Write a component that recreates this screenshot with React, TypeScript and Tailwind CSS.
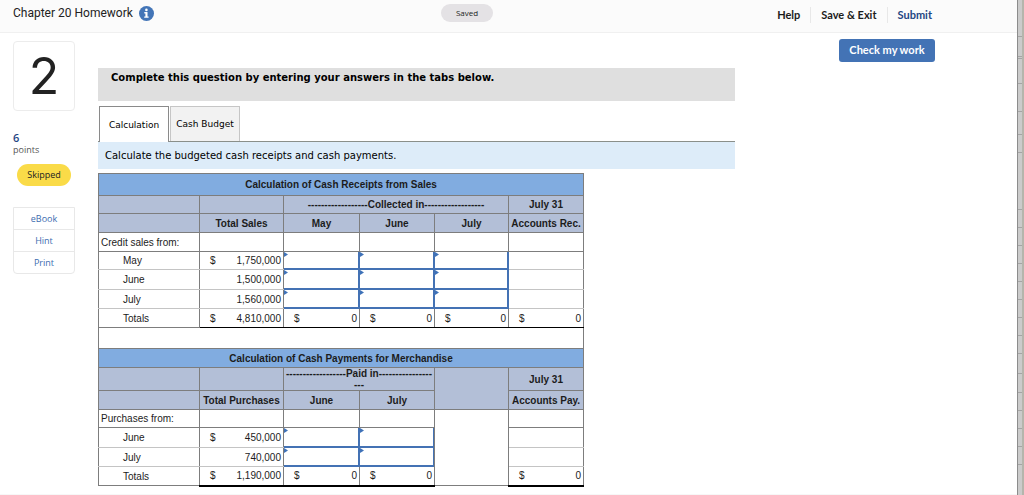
import { useState } from 'react'
import type { ReactNode } from 'react'

const MONTHS = ['May', 'June', 'July']

const SALES = [
  { month: 'May', dollar: true, amount: '1,750,000', height: 'h-[18px]', input: 'h-[17px]', line: 'border-t-[#c4c4c4]' },
  { month: 'June', dollar: false, amount: '1,500,000', height: 'h-[20px]', input: 'h-[19px]', line: 'border-t-[#c4c4c4]' },
  { month: 'July', dollar: false, amount: '1,560,000', height: 'h-[19px]', input: 'h-[18px]', line: 'border-t-[#7d7d7d]' },
]

const PURCHASES = [
  { month: 'June', dollar: true, amount: '450,000', height: 'h-[20px]', input: 'h-[19px]', line: 'border-t-[#c4c4c4]' },
  { month: 'July', dollar: false, amount: '740,000', height: 'h-[19px]', input: 'h-[18px]', line: 'border-t-[#7d7d7d]' },
]

// row heights of the sheet that shows behind the page at the right edge
const SHEET_ROWS = [37, 20, 2, 25, 28, 23, 18, 57, 18, 18, 18, 18, 18, 18, 18, 18, 20, 19, 18, 18, 18, 18]

const HEAD = 'border border-[#7d7d7d] bg-[#b3bfd7] p-0 text-center font-bold'
const TITLE = 'border border-[#7d7d7d] bg-[#81ace0] p-0 text-center font-bold'
const CELL = 'border border-[#7d7d7d] p-0'

function Amount({ dollar = true, children }: { dollar?: boolean; children: ReactNode }) {
  return (
    <div className="flex justify-between pl-2.5 pr-0.5">
      <span>{dollar ? '$' : ''}</span>
      <span>{children}</span>
    </div>
  )
}

function AnswerCell({ label, height }: { label: string; height: string }) {
  return (
    <td className="relative border border-[#4472b4] p-0">
      <input
        type="text"
        aria-label={label}
        className={`block w-full border-b border-r border-[#4472b4] bg-transparent px-1 text-right outline-none ${height}`}
      />
      <svg className="pointer-events-none absolute left-0 top-0 h-[5px] w-[4px]" viewBox="0 0 4 5">
        <path d="M0 0l4 2.5L0 5z" fill="#3f72b8" />
      </svg>
    </td>
  )
}

function BudgetTable() {
  return (
    <table className="mt-1 w-[486px] table-fixed border-collapse border border-[#7d7d7d] font-['Liberation_Sans',Arial,sans-serif] text-[10px] leading-[11px] text-[#1c1c1c]">
      <colgroup>
        <col className="w-[101px]" />
        <col className="w-[84px]" />
        <col className="w-[76px]" />
        <col className="w-[75px]" />
        <col className="w-[74px]" />
        <col className="w-[75px]" />
      </colgroup>
      <tbody>
        <tr className="h-[22px]">
          <th colSpan={6} className={TITLE}>Calculation of Cash Receipts from Sales</th>
        </tr>
        <tr className="h-[18px]">
          <td className={HEAD} />
          <td className={HEAD} />
          <th colSpan={3} className={HEAD}>------------------Collected in------------------</th>
          <th className={HEAD}>July 31</th>
        </tr>
        <tr className="h-[19px]">
          <td className={HEAD} />
          <th className={HEAD}>Total Sales</th>
          {MONTHS.map((m) => (
            <th key={m} className={HEAD}>{m}</th>
          ))}
          <th className={HEAD}>Accounts Rec.</th>
        </tr>
        <tr className="h-[19px]">
          <td className={`${CELL} pl-0.5`}>Credit sales from:</td>
          <td className={CELL} />
          <td className={CELL} />
          <td className={CELL} />
          <td className={CELL} />
          <td className={CELL} />
        </tr>
        {SALES.map((row) => (
          <tr key={row.month} className={row.height}>
            <td className={`border border-x-[#7d7d7d] border-b-[#c4c4c4] p-0 pl-6 ${row.line}`}>{row.month}</td>
            <td className={`border border-x-[#7d7d7d] border-b-[#c4c4c4] p-0 ${row.line}`}>
              <Amount dollar={row.dollar}>{row.amount}</Amount>
            </td>
            {MONTHS.map((m) => (
              <AnswerCell key={m} label={`${row.month} sales collected in ${m}`} height={row.input} />
            ))}
            <td className={`border border-x-[#7d7d7d] border-b-[#c4c4c4] p-0 ${row.line}`} />
          </tr>
        ))}
        <tr className="h-[19px]">
          <td className={`${CELL} pl-6`}>Totals</td>
          <td className="border border-x-[#7d7d7d] border-y-black p-0"><Amount>4,810,000</Amount></td>
          {['May', 'June', 'July', 'Rec'].map((m) => (
            <td key={m} className="border border-x-[#7d7d7d] border-y-black p-0"><Amount>0</Amount></td>
          ))}
        </tr>
        <tr className="h-[21px]">
          <td colSpan={6} className="border-x border-[#7d7d7d] p-0" />
        </tr>
        <tr className="h-[19px]">
          <th colSpan={6} className={TITLE}>Calculation of Cash Payments for Merchandise</th>
        </tr>
        <tr className="h-[23px]">
          <td className={HEAD} />
          <td className={HEAD} />
          <th colSpan={2} className={HEAD}>
            ------------------Paid in----------------
            <br />
            ---
          </th>
          <td rowSpan={2} className={HEAD} />
          <th className={HEAD}>July 31</th>
        </tr>
        <tr className="h-[19px]">
          <td className={HEAD} />
          <th className={HEAD}>Total Purchases</th>
          <th className={HEAD}>June</th>
          <th className={HEAD}>July</th>
          <th className={HEAD}>Accounts Pay.</th>
        </tr>
        <tr className="h-[18px]">
          <td className={`${CELL} pl-0.5`}>Purchases from:</td>
          <td className={CELL} />
          <td className={CELL} />
          <td className={CELL} />
          <td rowSpan={4} className={CELL} />
          <td className={CELL} />
        </tr>
        {PURCHASES.map((row) => (
          <tr key={row.month} className={row.height}>
            <td className={`border border-x-[#7d7d7d] border-b-[#c4c4c4] p-0 pl-6 ${row.line}`}>{row.month}</td>
            <td className={`border border-x-[#7d7d7d] border-b-[#c4c4c4] p-0 ${row.line}`}>
              <Amount dollar={row.dollar}>{row.amount}</Amount>
            </td>
            <AnswerCell label={`${row.month} purchases paid in June`} height={row.input} />
            <AnswerCell label={`${row.month} purchases paid in July`} height={row.input} />
            <td className={`border border-x-[#7d7d7d] border-b-[#c4c4c4] p-0 ${row.line}`} />
          </tr>
        ))}
        <tr className="h-[19px]">
          <td className={`${CELL} pl-6`}>Totals</td>
          <td className="border border-x-[#7d7d7d] border-b-2 border-b-black p-0"><Amount>1,190,000</Amount></td>
          {['June', 'July', 'Pay'].map((m) => (
            <td key={m} className="border border-x-[#7d7d7d] border-b-2 border-b-black p-0"><Amount>0</Amount></td>
          ))}
        </tr>
      </tbody>
    </table>
  )
}

export default function App() {
  const [tab, setTab] = useState('Calculation')

  return (
    <div className="flex min-h-screen bg-white">
      <div className="flex min-w-0 flex-1 flex-col">
        <header className="grid h-[33px] grid-cols-[1fr_auto_1fr] border-b border-[#f0f0f0] bg-[#fbfbfb] pr-[83px]">
          <div className="flex h-[26px] items-center gap-1.5 pl-[13px]">
            <h1 className="font-['Roboto',sans-serif] text-[12px] text-[#222]">Chapter 20 Homework</h1>
            <button type="button" aria-label="Assignment info">
              <svg className="h-[15px] w-[15px]" viewBox="0 0 15 15">
                <circle cx="7.5" cy="7.5" r="7.5" fill="#4375b7" />
                <circle cx="7.4" cy="3.9" r="1.3" fill="#fff" />
                <path d="M5.3 6h3.2v4.4h1.1v1.4H5.2v-1.4h1.2V7.4H5.3z" fill="#fff" />
              </svg>
            </button>
          </div>
          <div className="mt-1 flex h-[18px] w-[52px] items-center justify-center rounded-full bg-[#e4e2e5] font-['Open_Sans',sans-serif] text-[8px] text-[#222]">
            Saved
          </div>
          <nav className="flex h-[30px] items-center justify-end pr-0.5 font-['Lato',sans-serif] text-[11px] leading-[16px] font-bold text-[#1b1b1b]">
            <a href="#help" className="px-2.5">Help</a>
            <a href="#exit" className="border-x border-[#e8e8e8] px-2.5">Save &amp; Exit</a>
            <a href="#submit" className="pl-2.5 text-[#1f4683]">Submit</a>
          </nav>
        </header>

        <div className="flex flex-1 items-start pb-[7px] pl-[13px] pr-[82px]">
          <aside className="mt-2 w-[62px] shrink-0 font-['Open_Sans',sans-serif]">
            <div className="flex h-[70px] items-center justify-center rounded border border-[#ececec] font-['Inter',sans-serif] text-[50px] text-[#222]">2</div>
            <div className="mt-5 text-[11px] font-semibold leading-[13px] text-[#1f4683]">6</div>
            <div className="text-[9px] leading-[12px] text-[#555]">points</div>
            <div className="mx-auto mt-2 flex h-[22px] w-[54px] items-center justify-center rounded-full bg-[#fadb48] text-[9px] text-[#222]">
              Skipped
            </div>
            <nav className="mt-[21px] divide-y divide-[#e8e8e8] rounded-b border border-[#e8e8e8] text-center text-[9px] leading-[21px] text-[#3c6cb0]">
              <a href="#ebook" className="block">eBook</a>
              <a href="#hint" className="block">Hint</a>
              <a href="#print" className="block">Print</a>
            </nav>
          </aside>

          <main className="ml-[23px] mt-[35px] min-w-0 flex-1 font-['DejaVu_Sans',Verdana,sans-serif] text-[10px] text-black">
            <p className="h-[33px] bg-[#dfdfdf] pl-[13px] pt-0.5 font-bold leading-[16px]">
              Complete this question by entering your answers in the tabs below.
            </p>
            <div className="mt-[5px] flex gap-px border-b border-[#8a8f8a] pl-px" role="tablist">
              {['Calculation', 'Cash Budget'].map((name) => (
                <button
                  key={name}
                  type="button"
                  role="tab"
                  aria-selected={tab === name}
                  onClick={() => setTab(name)}
                  className={`w-[70px] whitespace-nowrap border border-b-0 pt-0.5 text-[9px] ${
                    tab === name ? '-mb-px h-[36px] border-[#8a8a8a] bg-white' : 'h-[35px] border-[#c6c6c6] bg-[#f2f2f2]'
                  }`}
                >
                  {name}
                </button>
              ))}
            </div>
            <p className="h-[27px] bg-[#ddecf9] pl-[7px] leading-[27px]">Calculate the budgeted cash receipts and cash payments.</p>
            <BudgetTable />
          </main>

          <button
            type="button"
            className="ml-[104px] mt-1.5 h-[23px] w-[96px] shrink-0 rounded-[3px] bg-[#4373b5] font-['Lato',sans-serif] text-[11px] font-bold text-white"
          >
            Check my work
          </button>
        </div>
        <footer className="h-0.5 bg-[#f7f7f7]" />
      </div>

      <div className="flex w-[7px] shrink-0 border-l border-[#8c8c8c] bg-[#cbcbcb]">
        <div className="flex-1">
          {SHEET_ROWS.map((height, i) => (
            <div key={i} className="border-b border-[#a5a5a5]" style={{ height }} />
          ))}
        </div>
        <div className="w-0.5 bg-[#b5b5ac]" />
      </div>
    </div>
  )
}
